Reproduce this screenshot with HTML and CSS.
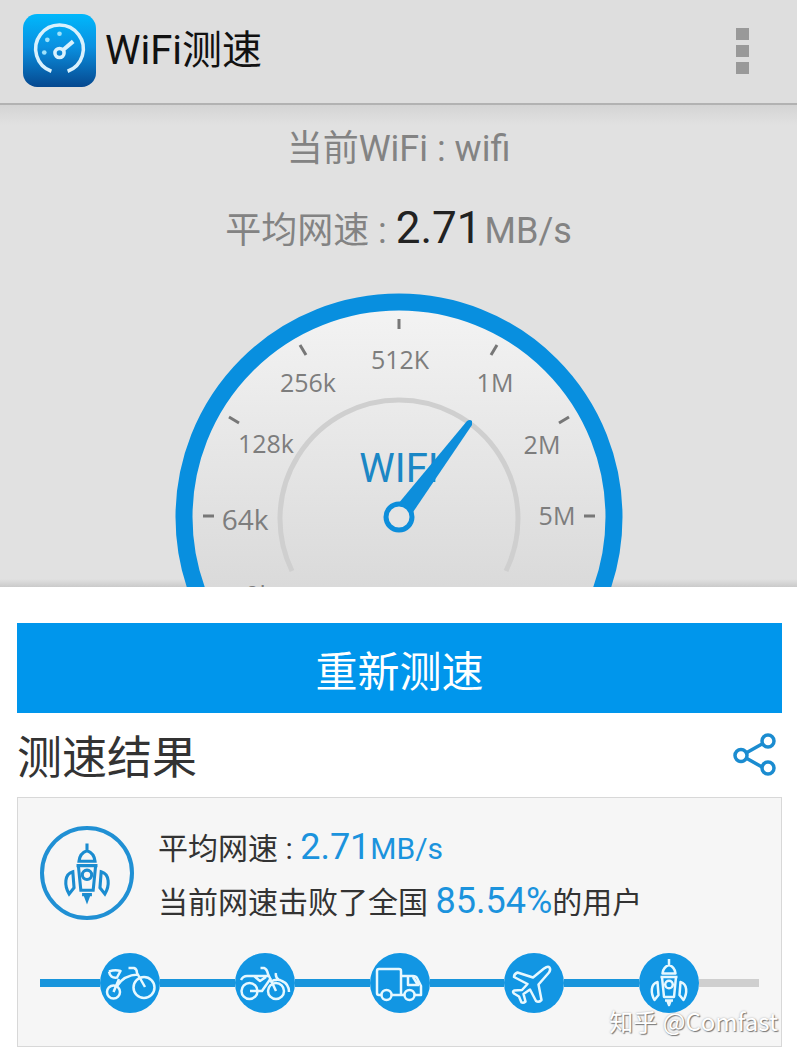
FILE: index.html
```
<!DOCTYPE html>
<html lang="zh-CN">
<head>
    <meta charset="UTF-8">
    <meta name="viewport" content="width=device-width, initial-scale=1.0">
    <title>WiFi测速</title>
    <link rel="stylesheet" href="styles.css">
</head>
<body>
    <svg class="symbols" aria-hidden="true">
        <symbol id="rocket" viewBox="0 0 60 60">
            <path d="M30 6v6M23.500 20.500C24 16 27 13 30 12c3 1 6 4 6.500 8.500zM23 24h14l-2 20H25zM21.500 24h17M18.500 29c-7 2-7 11-3 18l4-5zM41.500 29c7 2 7 11 3 18l-4-5zM26 47.500h8M28.500 48l1.500 4 1.500-4z"/>
            <circle cx="30" cy="31.500" r="3.800"/>
        </symbol>
    </svg>

    <header class="app-bar">
        <svg class="app-icon" viewBox="0 0 72 72" aria-hidden="true">
            <defs>
                <linearGradient id="iconFill" x1="0" y1="0" x2="0" y2="1">
                    <stop offset="0" stop-color="#00b8fc"/>
                    <stop offset="0.450" stop-color="#0a90e0"/>
                    <stop offset="1" stop-color="#06488f"/>
                </linearGradient>
            </defs>
            <rect width="72" height="72" rx="14" fill="url(#iconFill)"/>
            <path d="M28 56.500A23.500 23.500 0 1 1 44 56.500" fill="none" stroke="#d9f1fd" stroke-width="3.500"/>
            <circle cx="36" cy="38.500" r="4.500" fill="none" stroke="#d9f1fd" stroke-width="3.500"/>
            <path d="M39.500 35.500L49.500 27" stroke="#d9f1fd" stroke-width="4"/>
            <g fill="#9fe2fb">
                <circle cx="36" cy="19.500" r="2.300"/>
                <circle cx="24" cy="25.500" r="2.300"/>
                <circle cx="21" cy="38" r="2.300"/>
            </g>
        </svg>
        <h1>WiFi测速</h1>
        <button class="menu-button" type="button" aria-label="菜单">
            <span></span><span></span><span></span>
        </button>
    </header>

    <main>
        <section class="meter">
            <p class="network">当前WiFi : wifi</p>
            <p class="speed">平均网速 : <strong>2.71</strong>MB/s</p>
            <svg class="gauge" viewBox="0 0 448 294" role="img" aria-label="WIFI 2.71MB/s">
                <defs>
                    <linearGradient id="dialFill" gradientUnits="userSpaceOnUse" x1="0" y1="16" x2="0" y2="294">
                        <stop offset="0" stop-color="#f3f3f3"/>
                        <stop offset="1" stop-color="#dadada"/>
                    </linearGradient>
                </defs>
                <circle cx="224" cy="224" r="215" fill="url(#dialFill)" stroke="#088fdf" stroke-width="17"/>
                <path class="inner-arc" d="M117 278A119 119 0 1 1 331 278"/>
                <path class="ticks" d="M224 26v10M125 52l6 10M54 124l10 6M28 223h11M322 52l-6 10M394 124l-10 6M409 223h11"/>
                <g class="labels">
                    <text x="225" y="76">512K</text>
                    <text x="133" y="99">256k</text>
                    <text x="320" y="99">1M</text>
                    <text x="91" y="160">128k</text>
                    <text x="367" y="161">2M</text>
                    <text x="70" y="237" class="large">64k</text>
                    <text x="382" y="232">5M</text>
                    <text x="84" y="311">0k</text>
                </g>
                <text class="dial-name" x="224" y="189">WIFI</text>
                <path d="M218 217L292 128q3-2 5 0l0 4L232 228z" fill="#0d8edb"/>
                <circle cx="224" cy="224" r="13" fill="#e4e4e4" stroke="#0d8edb" stroke-width="5"/>
            </svg>
        </section>

        <section class="panel">
            <button class="retest" type="button">重新测速</button>
            <div class="result-head">
                <h2>测速结果</h2>
                <button class="share" type="button" aria-label="分享">
                    <svg viewBox="0 0 44 44">
                        <path d="M13 20L29 11M13 25l16 9"/>
                        <circle cx="8" cy="22.500" r="6"/>
                        <circle cx="35" cy="8" r="6"/>
                        <circle cx="35" cy="35" r="6"/>
                    </svg>
                </button>
            </div>

            <div class="card">
                <div class="summary">
                    <div class="badge"><svg><use href="#rocket"/></svg></div>
                    <div class="summary-text">
                        <p>平均网速 : <span class="value">2.71</span><span class="unit">MB/s</span></p>
                        <p>当前网速击败了全国 <span class="value">85.54%</span>的用户</p>
                    </div>
                </div>
                <div class="levels">
                    <div class="line edge"></div>
                    <div class="level">
                        <svg viewBox="0 0 60 60">
                            <circle cx="13.500" cy="39" r="6.500"/>
                            <circle cx="44" cy="34.500" r="10.500"/>
                            <path d="M13.500 39L19 26M9 18.500q6-2 11.500-.5L17 24.500q-7 1-8-6M17 33Q24 22 38 21.500M28.500 15H34q3 1 3 5l8 14"/>
                        </svg>
                    </div>
                    <div class="line"></div>
                    <div class="level">
                        <svg viewBox="0 0 60 60">
                            <circle cx="14.500" cy="38" r="8"/>
                            <circle cx="41" cy="38" r="8"/>
                            <path d="M6 27q2-4 6-4h21M15 38h12l9-13M19 23l6 5 6-4M25.500 15H29q3 1 4 6l8 17M35 29q7-4 12-1 7 3 7 11M41 20q-1 4 3 7"/>
                        </svg>
                    </div>
                    <div class="line"></div>
                    <div class="level">
                        <svg viewBox="0 0 60 60">
                            <path d="M11 42H9q-2 0-2-2V18q0-2 2-2h20q2 0 2 2v24H22M31 23h12q3 0 4 2l4 8v9h-6M34 42h-3M38 24v8h11M43 24l5 8"/>
                            <circle cx="16.500" cy="42" r="5"/>
                            <circle cx="39.500" cy="42" r="5"/>
                        </svg>
                    </div>
                    <div class="line"></div>
                    <div class="level">
                        <svg viewBox="0 0 60 60">
                            <path d="M40 15.500q4-3 5.500-1 1.500 2-.5 5L34.500 31.500l3 15.500q-3 3-5.500 1l-6-11.500-6.500 4.500 2 7.500q-2 2-4 1l-2.500-6-5-3q-2-2 0-3l8-.5 5.500-6L10 24q0-3 3.500-4.500L29 24.500z"/>
                        </svg>
                    </div>
                    <div class="line"></div>
                    <div class="level"><svg><use href="#rocket"/></svg></div>
                    <div class="line edge rest"></div>
                </div>
            </div>
            <span class="watermark">知乎 @Comfast</span>
        </section>
    </main>
</body>
</html>
```
FILE: styles.css
```
* {
    box-sizing: border-box;
}

body {
    font-family: Roboto, "Noto Sans CJK SC", sans-serif;
    margin: 0;
    min-height: 100vh;
    background-color: #fff;
    color: #333;
}

h1, h2, p {
    margin: 0;
    font-weight: normal;
}

button {
    border: none;
    padding: 0;
    background: none;
    font-family: inherit;
    cursor: pointer;
}

.symbols {
    position: absolute;
    width: 0;
    height: 0;
}

/* Top bar */
.app-bar {
    display: flex;
    align-items: center;
    height: 105px;
    padding: 0 48px 2px 23px;
    background-color: #dedede;
    border-bottom: 2px solid #b2b2b2;
}

.app-icon {
    width: 73px;
    height: 73px;
    margin-right: 9px;
}

.app-bar h1 {
    flex: 1;
    font-size: 40px;
    line-height: 48px;
    color: #111;
}

.menu-button {
    display: flex;
    flex-direction: column;
    gap: 5px;
}

.menu-button span {
    width: 13px;
    height: 12px;
    background-color: #999;
}

/* Speed meter */
.meter {
    display: flex;
    flex-direction: column;
    align-items: center;
    padding-top: 20px;
    background: linear-gradient(#d4d4d4, #e1e1e1 20px, #e1e1e1 calc(100% - 8px), #cacaca);
    color: #838383;
    font-size: 36px;
}

.network {
    line-height: 48px;
}

.speed {
    margin-top: 25px;
    line-height: 60px;
}

.speed strong {
    font-size: 44px;
    font-weight: normal;
    color: #222;
    margin-right: 3px;
}

.gauge {
    display: block;
    width: 448px;
    max-width: 100%;
    margin-top: 32px;
}

.inner-arc {
    fill: none;
    stroke: #cfcfcf;
    stroke-width: 5;
}

.ticks {
    stroke: #777;
    stroke-width: 3;
}

.labels {
    font-family: "Open Sans", "Noto Sans", sans-serif;
    font-size: 25px;
    fill: #7d7d7d;
    text-anchor: middle;
}

.labels .large {
    font-size: 28px;
}

.dial-name {
    font-size: 40px;
    fill: #1b87c5;
    text-anchor: middle;
}

/* Results */
.panel {
    position: relative;
    padding: 36px 15px 8px 17px;
    background-color: #fff;
}

.retest {
    display: block;
    width: 100%;
    height: 90px;
    background-color: #0096ec;
    color: #fff;
    font-size: 42px;
}

.result-head {
    display: flex;
    align-items: center;
    justify-content: space-between;
    height: 84px;
    padding-right: 5px;
}

.result-head h2 {
    padding-bottom: 2px;
    font-size: 45px;
}

.share svg {
    display: block;
    width: 44px;
    height: 44px;
    fill: none;
    stroke: #1b8cd0;
    stroke-width: 3.5;
}

.card {
    padding: 24px 22px 33px;
    background-color: #f6f6f6;
    border: 1px solid #d8d8d8;
}

.summary {
    display: flex;
    align-items: flex-start;
    gap: 24px;
}

.badge {
    display: flex;
    align-items: center;
    justify-content: center;
    flex: none;
    width: 94px;
    height: 94px;
    margin-top: 4px;
    border: 4px solid #2090d4;
    border-radius: 50%;
}

.badge svg {
    width: 74px;
    height: 74px;
    fill: none;
    stroke: #1b8cd0;
    stroke-width: 2.5;
}

.summary-text {
    font-size: 30px;
    line-height: 54px;
}

.value {
    color: #1b93dd;
    font-size: 36px;
    line-height: 1;
}

.unit {
    color: #1b93dd;
}

.levels {
    display: flex;
    align-items: center;
    margin-top: 23px;
}

.line {
    flex: 5;
    height: 8px;
    background-color: #1895dc;
}

.line.edge {
    flex: 4;
}

.line.rest {
    background-color: #cfcfcf;
}

.level {
    flex: none;
    width: 60px;
    height: 60px;
    border-radius: 50%;
    background-color: #1296e3;
}

.level svg {
    display: block;
    width: 60px;
    height: 60px;
    fill: none;
    stroke: #e6f8ff;
    stroke-width: 2.5;
    stroke-linejoin: round;
}

.watermark {
    position: absolute;
    right: 19px;
    bottom: 16px;
    font-family: "Noto Sans CJK SC", sans-serif;
    font-size: 24px;
    line-height: 36px;
    color: #fff;
    text-shadow: 1px 1px 1px #777, 0 0 2px #aaa;
}
```
